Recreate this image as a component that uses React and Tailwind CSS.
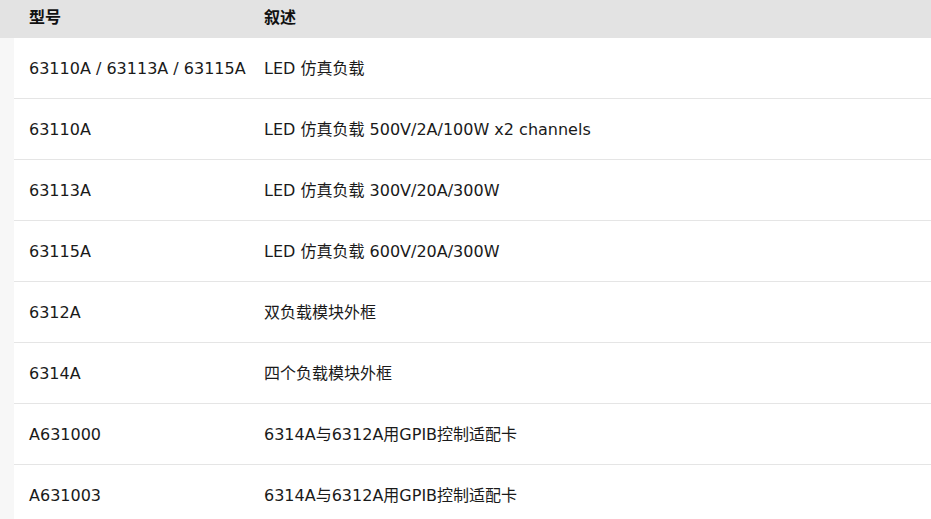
import React from "react";

const rows = [
    ["63110A / 63113A / 63115A", "LED 仿真负载"],
    ["63110A", "LED 仿真负载 500V/2A/100W x2 channels"],
    ["63113A", "LED 仿真负载 300V/20A/300W"],
    ["63115A", "LED 仿真负载 600V/20A/300W"],
    ["6312A", "双负载模块外框"],
    ["6314A", "四个负载模块外框"],
    ["A631000", "6314A与6312A用GPIB控制适配卡"],
    ["A631003", "6314A与6312A用GPIB控制适配卡"],
];

const App = () => {
    return (
        <div
            className="w-[931px] h-[519px] overflow-hidden bg-white text-[16px] text-[#1a1a1a]"
            style={{ fontFamily: '"DejaVu Sans", "Noto Sans CJK SC", sans-serif' }}
        >
            {/* header */}
            <div className="flex items-center h-[38px] pb-[3px] bg-[#e3e3e3] font-bold text-[#111]">
                <div className="w-[264px] pl-[29px]">型号</div>
                <div>叙述</div>
            </div>

            {/* body */}
            <div className="flex">
                <div className="w-[14px] shrink-0 bg-[#f7f7f7]" />
                <div className="flex-1">
                    {rows.map((row, index) => (
                        <div key={index} className="flex items-center h-[61px] pt-[2px] border-b border-[#e5e5e5]">
                            <div className="w-[235px] shrink-0 pl-[15px]">{row[0]}</div>
                            <div className="pl-[15px]">{row[1]}</div>
                        </div>
                    ))}
                </div>
            </div>
        </div>
    );
};

export default App;
